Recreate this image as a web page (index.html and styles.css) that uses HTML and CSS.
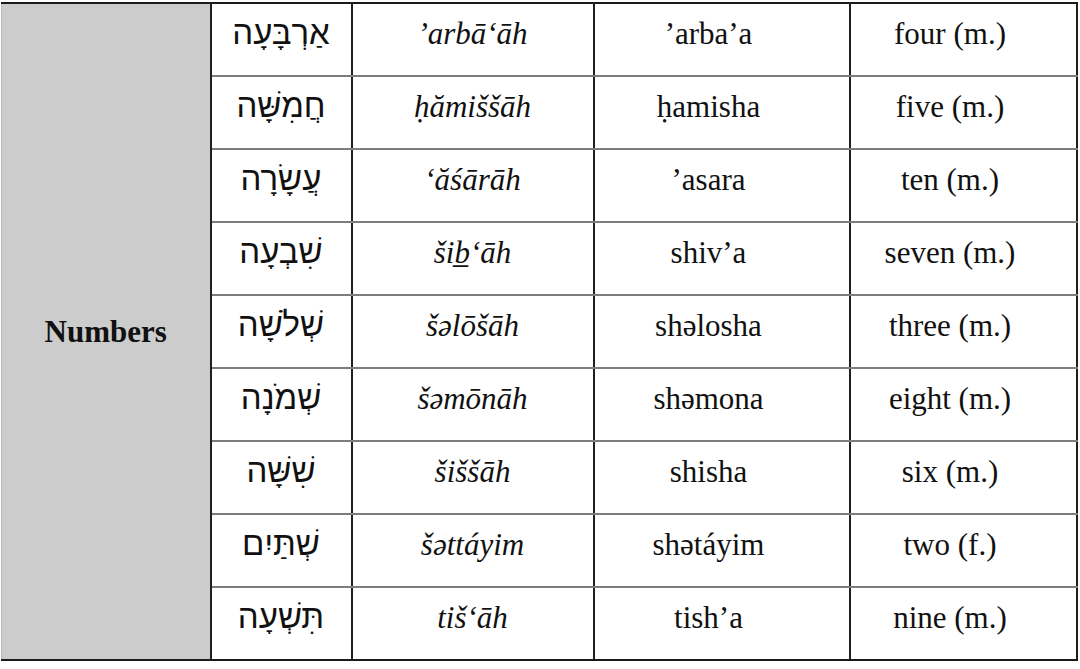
FILE: index.html
```html
<!DOCTYPE html>
<html lang="en">
<head>
<meta charset="utf-8">
<link rel="stylesheet" href="styles.css">
</head>
<body>
<table class="vocab">
  <colgroup>
    <col class="c-cat"><col class="c-heb"><col class="c-tr"><col class="c-pr"><col class="c-en">
  </colgroup>
  <tbody>
    <tr>
      <td class="cat" rowspan="9">Numbers</td>
      <td class="heb" dir="rtl">אַרְבָּעָה</td>
      <td class="tr">’arbā‘āh</td>
      <td class="pr">’arba’a</td>
      <td class="en">four (m.)</td>
    </tr>
    <tr>
      <td class="heb" dir="rtl">חֲמִשָּׁה</td>
      <td class="tr">ḥămiššāh</td>
      <td class="pr">ḥamisha</td>
      <td class="en">five (m.)</td>
    </tr>
    <tr>
      <td class="heb" dir="rtl">עֲשָׂרָה</td>
      <td class="tr">‘ăśārāh</td>
      <td class="pr">’asara</td>
      <td class="en">ten (m.)</td>
    </tr>
    <tr>
      <td class="heb" dir="rtl">שִׁבְעָה</td>
      <td class="tr">šib̲‘āh</td>
      <td class="pr">shiv’a</td>
      <td class="en">seven (m.)</td>
    </tr>
    <tr>
      <td class="heb" dir="rtl">שְׁלֹשָׁה</td>
      <td class="tr">šəlōšāh</td>
      <td class="pr">shəlosha</td>
      <td class="en">three (m.)</td>
    </tr>
    <tr>
      <td class="heb" dir="rtl">שְׁמֹנָה</td>
      <td class="tr">šəmōnāh</td>
      <td class="pr">shəmona</td>
      <td class="en">eight (m.)</td>
    </tr>
    <tr>
      <td class="heb" dir="rtl">שִׁשָּׁה</td>
      <td class="tr">šiššāh</td>
      <td class="pr">shisha</td>
      <td class="en">six (m.)</td>
    </tr>
    <tr>
      <td class="heb" dir="rtl">שְׁתַּיִם</td>
      <td class="tr">šəttáyim</td>
      <td class="pr">shətáyim</td>
      <td class="en">two (f.)</td>
    </tr>
    <tr class="last">
      <td class="heb" dir="rtl">תִּשְׁעָה</td>
      <td class="tr">tiš‘āh</td>
      <td class="pr">tish’a</td>
      <td class="en">nine (m.)</td>
    </tr>
  </tbody>
</table>
</body>
</html>
```
FILE: styles.css
```css
html, body {
  margin: 0;
  padding: 0;
  background: #ffffff;
}
body {
  padding: 2px 0 0 1px;
  font-family: "Liberation Serif", "Times New Roman", serif;
  color: #111111;
}
.vocab {
  border-collapse: collapse;
  table-layout: fixed;
  width: 1075px;
  border-top: 2px solid #1a1a1a;
  border-bottom: 2px solid #1a1a1a;
}
.c-cat { width: 209px; }
.c-heb { width: 141px; }
.c-tr  { width: 242px; }
.c-pr  { width: 256px; }
.c-en  { width: 227px; }

.vocab td {
  height: 73px;
  padding: 12px 0 0 0;
  text-align: center;
  vertical-align: top;
  border-left: 2px solid #1f1f1f;
  border-right: 2px solid #1f1f1f;
  border-bottom: 2px solid #7d7d7d;
  font-size: 31px;
  line-height: 35px;
  box-sizing: border-box;
}
.vocab td.cat {
  background: #cccccc;
  vertical-align: middle;
  padding-top: 0;
  font-weight: bold;
  font-size: 31px;
  border-left: 1px solid #b8b8b8;
  border-bottom: 2px solid #1a1a1a;
}
.vocab td.heb {
  font-family: "Liberation Sans", "DejaVu Sans", Arial, sans-serif;
  font-size: 33px;
  line-height: 36px;
  padding-top: 11px;
}
.vocab td.tr {
  font-style: italic;
}
.vocab td.pr,
.vocab td.en {
  padding-right: 26px;
}
.vocab tr.last td {
  border-bottom: 2px solid #1a1a1a;
}
```
